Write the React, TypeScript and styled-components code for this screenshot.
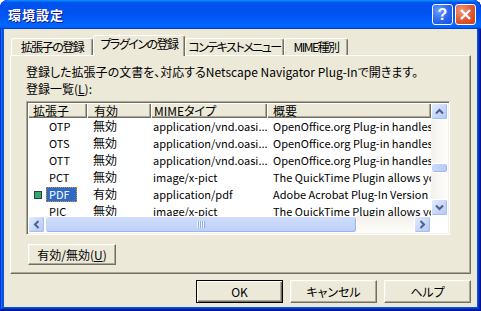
import styled, { createGlobalStyle, css } from "styled-components";

const GlobalStyle = createGlobalStyle`
  html, body {
    margin: 0;
    padding: 0;
  }
  body {
    background: #ffffff;
    color: #000;
    font-family: "Noto Sans CJK JP", "Noto Sans", sans-serif;
    font-size: 12px;
    font-feature-settings: "palt";
  }
`;

const Window = styled.div`
  width: 481px;
  height: 311px;
  display: flex;
  flex-direction: column;
  background: #0055ea;
  border-radius: 8px 8px 0 0;
  overflow: hidden;
  box-shadow: inset -1px -1px #00138c, inset 1px 1px #0831d9,
    inset -2px -2px #001ea0, inset 2px 2px #166aee,
    inset -3px -3px #003bda, inset 3px 3px #0855dd;
`;

const TitleBar = styled.div`
  flex: none;
  height: 29px;
  display: flex;
  align-items: center;
  gap: 2px;
  padding: 0 5px 0 8px;
  border-radius: 8px 8px 0 0;
  background: linear-gradient(
    180deg,
    #0997ff,
    #0053ee 8%,
    #0050ee 40%,
    #06f 88%,
    #06f 93%,
    #005bff 95%,
    #003dd7 96%,
    #003dd7
  );
`;

const Title = styled.div`
  flex: 1;
  color: #fff;
  font-size: 13px;
  font-weight: bold;
  letter-spacing: 1px;
  text-shadow: 1px 1px #0f1089;
`;

const CaptionButton = styled.div<{ $kind: "help" | "close" }>`
  box-sizing: border-box;
  width: 21px;
  height: 21px;
  display: grid;
  place-items: center;
  border: 1px solid #fff;
  border-radius: 3px;
  color: #fff;
  font-family: "Liberation Sans", sans-serif;
  font-size: 16px;
  font-weight: bold;
  background: ${(p) =>
    p.$kind === "close"
      ? "radial-gradient(circle at 30% 30%, #f19b7d, #e1562e 55%, #c8401a)"
      : "radial-gradient(circle at 30% 30%, #6aa0ff, #2a65ee 55%, #1a4fdc)"};
`;

const Client = styled.div`
  flex: 1;
  margin: 0 4px 4px;
  padding: 6px 6px 4px;
  display: flex;
  flex-direction: column;
  background: #ece9d8;
`;

const TabStrip = styled.div`
  flex: none;
  height: 20px;
  display: flex;
  align-items: flex-end;
  padding-left: 1px;
  position: relative;
  z-index: 1;
`;

const Tab = styled.div<{ $active?: boolean; $w: number }>`
  box-sizing: border-box;
  width: ${(p) => p.$w}px;
  height: ${(p) => (p.$active ? 21 : 17)}px;
  margin-bottom: ${(p) => (p.$active ? -1 : 0)}px;
  padding-top: 1px;
  text-align: center;
  line-height: 14px;
  letter-spacing: -1.5px;
  white-space: nowrap;
  background: #ece9d8;
  border: 1px solid #fff;
  border-bottom: none;
  border-right-color: #716f64;
  border-radius: 3px 3px 0 0;
  box-shadow: inset -1px 0 #aca899;
  position: relative;
  z-index: ${(p) => (p.$active ? 2 : 1)};
`;

const Panel = styled.div`
  box-sizing: border-box;
  height: 219px;
  flex: none;
  display: flex;
  flex-direction: column;
  align-items: flex-start;
  padding: 9px 20px 0 15px;
  border: 1px solid #fff;
  border-right-color: #716f64;
  border-bottom-color: #716f64;
  box-shadow: inset -1px -1px #aca899;
`;

const Line = styled.div<{ $gap?: number }>`
  line-height: 14px;
  white-space: nowrap;
  margin-top: ${(p) => p.$gap ?? 0}px;
`;

const Mn = styled.span`
  text-decoration: underline;
`;

const ListBox = styled.div`
  box-sizing: border-box;
  width: 424px;
  height: 134px;
  margin-top: 5px;
  padding: 1px;
  border: 1px solid;
  border-color: #aca899 #fff #fff #aca899;
  box-shadow: inset 1px 1px #716f64, inset -1px -1px #f1efe2;
  background: #fff;
  display: grid;
  grid-template-columns: 1fr 17px;
  grid-template-rows: 1fr 17px;
`;

const Viewport = styled.div`
  overflow: hidden;
  display: flex;
  flex-direction: column;
`;

const COLS = "59px 64px 116px 1fr";

const HeaderRow = styled.div`
  flex: none;
  display: grid;
  grid-template-columns: ${COLS};
  height: 15px;
`;

const HeaderCell = styled.div<{ $pad: number }>`
  padding-left: ${(p) => p.$pad}px;
  line-height: 15px;
  white-space: nowrap;
  overflow: hidden;
  background: #ece9d8;
  box-shadow: inset 1px 1px #fff, inset -1px -1px #716f64,
    inset -2px -2px #aca899;
`;

const Row = styled.div`
  flex: none;
  display: grid;
  grid-template-columns: ${COLS};
  height: 17px;
  line-height: 16px;
  font-size: 11px;
`;

const Cell = styled.div<{ $pad: number; $jp?: boolean }>`
  padding-left: ${(p) => p.$pad}px;
  font-size: ${(p) => (p.$jp ? 12 : 11)}px;
  white-space: nowrap;
  overflow: hidden;
`;

const ExtCell = styled.div`
  display: flex;
  align-items: center;
  padding-left: 6px;
`;

const StateIcon = styled.div<{ $on: boolean }>`
  box-sizing: border-box;
  width: 8px;
  height: 8px;
  border: 1px solid ${(p) => (p.$on ? "#2c3e4f" : "transparent")};
  background: ${(p) => (p.$on ? "#36a86a" : "transparent")};
`;

const ExtLabel = styled.span<{ $selected: boolean }>`
  box-sizing: border-box;
  margin-left: 4px;
  height: 15px;
  line-height: 15px;
  padding: 0 7px 0 3px;
  ${(p) =>
    p.$selected &&
    css`
      background: #316ac5;
      color: #fff;
      outline: 1px dotted #ce953a;
      outline-offset: -1px;
    `}
`;

const ScrollV = styled.div`
  display: flex;
  flex-direction: column;
`;

const ScrollH = styled.div`
  display: flex;
`;

const ArrowButton = styled.div`
  box-sizing: border-box;
  flex: none;
  width: 17px;
  height: 17px;
  display: grid;
  place-items: center;
  border: 1px solid #fff;
  border-radius: 2px;
  background: linear-gradient(135deg, #e3ecfe, #c6d6fb 55%, #b4c8f6);
  box-shadow: inset -1px -1px #a8bef0;
`;

const Track = styled.div<{ $dir: "v" | "h" }>`
  flex: 1;
  display: flex;
  flex-direction: ${(p) => (p.$dir === "v" ? "column" : "row")};
  background: ${(p) =>
    p.$dir === "v"
      ? "linear-gradient(90deg, #f3f1ec, #fefefb)"
      : "linear-gradient(180deg, #f3f1ec, #fefefb)"};
`;

const Thumb = styled.div<{ $dir: "v" | "h" }>`
  box-sizing: border-box;
  flex: none;
  display: grid;
  place-items: center;
  border: 1px solid #fff;
  border-radius: 3px;
  background: ${(p) =>
    p.$dir === "v"
      ? "linear-gradient(90deg, #c9d8fc, #b9cdf8)"
      : "linear-gradient(180deg, #d0ddfc, #bccff8)"};
  box-shadow: inset -1px -1px #9fb6ec;
`;

const Grip = styled.div`
  width: 8px;
  height: 7px;
  background: repeating-linear-gradient(90deg, #eef3fe 0 1px, #8eaef0 1px 2px);
`;

const Corner = styled.div`
  background: #fff;
`;

const Button = styled.button<{ $default?: boolean; $w: number; $h: number }>`
  box-sizing: border-box;
  width: ${(p) => p.$w}px;
  height: ${(p) => p.$h}px;
  padding: 0;
  font: inherit;
  font-feature-settings: "palt";
  color: #000;
  background: #ece9d8;
  border: 1px solid;
  border-color: #fff #716f64 #716f64 #fff;
  box-shadow: inset -1px -1px #aca899, inset 1px 1px #f1efe2;
  ${(p) =>
    p.$default &&
    css`
      border-color: #000;
      box-shadow: inset 1px 1px #fff, inset -1px -1px #716f64,
        inset -2px -2px #aca899;
    `}
`;

const ToggleButton = styled(Button)`
  margin: 9px 0 0 2px;
`;

const Footer = styled.div`
  flex: none;
  margin-top: 6px;
  display: flex;
  justify-content: flex-end;
  gap: 7px;
`;

const Chevron = ({ dir }: { dir: "up" | "down" | "left" | "right" }) => {
  const rot = { up: 0, right: 90, down: 180, left: 270 }[dir];
  return (
    <svg width="9" height="9" viewBox="0 0 9 9">
      <path
        d="M1 6.5 L4.5 3 L8 6.5"
        fill="none"
        stroke="#4d6185"
        strokeWidth="2"
        transform={`rotate(${rot} 4.5 4.5)`}
      />
    </svg>
  );
};

const rows = [
  { ext: "OTP", on: false, mime: "application/vnd.oasi...", desc: "OpenOffice.org Plug-in handles this MIME type" },
  { ext: "OTS", on: false, mime: "application/vnd.oasi...", desc: "OpenOffice.org Plug-in handles this MIME type" },
  { ext: "OTT", on: false, mime: "application/vnd.oasi...", desc: "OpenOffice.org Plug-in handles this MIME type" },
  { ext: "PCT", on: false, mime: "image/x-pict", desc: "The QuickTime Plugin allows you to view a wide variety" },
  { ext: "PDF", on: true, mime: "application/pdf", desc: "Adobe Acrobat Plug-In Version 7.00 for Netscape" },
  { ext: "PIC", on: false, mime: "image/x-pict", desc: "The QuickTime Plugin allows you to view a wide variety" },
];

const tabs = [
  { label: "拡張子の登録", w: 82 },
  { label: "プラグインの登録", w: 92, active: true },
  { label: "コンテキストメニュー", w: 99 },
  { label: "MIME種別", w: 64 },
];

export default function App() {
  return (
    <>
      <GlobalStyle />
      <Window>
        <TitleBar>
          <Title>環境設定</Title>
          <CaptionButton $kind="help">?</CaptionButton>
          <CaptionButton $kind="close">
            <svg width="13" height="13" viewBox="0 0 13 13">
              <path d="M2 2 L11 11 M11 2 L2 11" stroke="#fff" strokeWidth="2.4" />
            </svg>
          </CaptionButton>
        </TitleBar>
        <Client>
          <TabStrip>
            {tabs.map((t) => (
              <Tab key={t.label} $w={t.w} $active={t.active}>
                {t.label}
              </Tab>
            ))}
          </TabStrip>
          <Panel>
            <Line>
              登録した拡張子の文書を、対応するNetscape Navigator Plug-Inで開きます。
            </Line>
            <Line $gap={3}>
              登録一覧(<Mn>L</Mn>):
            </Line>
            <ListBox>
              <Viewport>
                <HeaderRow>
                  <HeaderCell $pad={5}>拡張子</HeaderCell>
                  <HeaderCell $pad={7}>有効</HeaderCell>
                  <HeaderCell $pad={3}>MIMEタイプ</HeaderCell>
                  <HeaderCell $pad={6}>概要</HeaderCell>
                </HeaderRow>
                {rows.map((r) => (
                  <Row key={r.ext}>
                    <ExtCell>
                      <StateIcon $on={r.on} />
                      <ExtLabel $selected={r.on}>{r.ext}</ExtLabel>
                    </ExtCell>
                    <Cell $pad={6} $jp>
                      {r.on ? "有効" : "無効"}
                    </Cell>
                    <Cell $pad={2}>{r.mime}</Cell>
                    <Cell $pad={6}>{r.desc}</Cell>
                  </Row>
                ))}
              </Viewport>
              <ScrollV>
                <ArrowButton>
                  <Chevron dir="up" />
                </ArrowButton>
                <Track $dir="v">
                  <Thumb $dir="v" style={{ marginTop: 43, height: 10 }} />
                </Track>
                <ArrowButton>
                  <Chevron dir="down" />
                </ArrowButton>
              </ScrollV>
              <ScrollH>
                <ArrowButton>
                  <Chevron dir="left" />
                </ArrowButton>
                <Track $dir="h">
                  <Thumb $dir="h" style={{ width: 312 }}>
                    <Grip />
                  </Thumb>
                </Track>
                <ArrowButton>
                  <Chevron dir="right" />
                </ArrowButton>
              </ScrollH>
              <Corner />
            </ListBox>
            <ToggleButton $w={88} $h={21}>
              有効/無効(<Mn>U</Mn>)
            </ToggleButton>
          </Panel>
          <Footer>
            <Button $default $w={87} $h={23}>
              OK
            </Button>
            <Button $w={87} $h={23}>
              キャンセル
            </Button>
            <Button $w={87} $h={23}>
              ヘルプ
            </Button>
          </Footer>
        </Client>
      </Window>
    </>
  );
}
